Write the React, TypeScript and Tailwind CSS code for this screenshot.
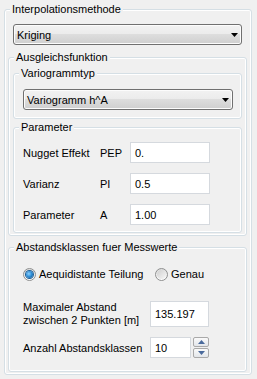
import React from 'react';

type BoxProps = { title: string; className?: string; children?: React.ReactNode };

const GroupBox = ({ title, className, children }: BoxProps) => (
  <fieldset className={`border border-[#d5dfe5] rounded-[3px] shadow-[inset_0_0_0_1px_#ffffff] ${className ?? ''}`}>
    <legend className="ml-[5px] px-[2px] leading-[14px] bg-[#f0f0f0]">{title}</legend>
    {children}
  </fieldset>
);

const ComboBox = ({ value, className }: { value: string; className?: string }) => (
  <div
    className={`flex items-center justify-between h-[21px] pl-[3px] pr-[3px] border border-[#707070] rounded-[3px] bg-[linear-gradient(#f2f2f2_0%,#ebebeb_50%,#dddddd_50%,#cfcfcf_100%)] shadow-[inset_0_0_0_1px_#fcfcfc] ${className ?? ''}`}
  >
    <span>{value}</span>
    <svg width="7" height="4" viewBox="0 0 7 4">
      <path d="M0 0h7L3.5 4z" fill="#000" />
    </svg>
  </div>
);

const TextBox = ({ value, className }: { value: string; className?: string }) => (
  <div className={`flex items-center pl-[4px] bg-white border border-[#d5d9de] ${className ?? ''}`}>{value}</div>
);

const Radio = ({ checked }: { checked?: boolean }) => (
  <div className="w-[13px] h-[13px] rounded-full border border-[#8e8f8f] bg-[linear-gradient(#dcdcdc,#ffffff)] flex items-center justify-center">
    {checked ? (
      <div className="w-[7px] h-[7px] rounded-full bg-[radial-gradient(circle_at_40%_40%,#8fd3ff_0%,#2a8ad4_50%,#0d4b7f_100%)] shadow-[0_0_0_1px_#1d5f98]" />
    ) : (
      <div className="w-[9px] h-[9px] rounded-full bg-[linear-gradient(135deg,#cfcfcf,#f7f7f7)]" />
    )}
  </div>
);

const SpinButton = ({ up }: { up?: boolean }) => (
  <div className="w-[16px] h-[10px] flex items-center justify-center border border-[#a9a9a9] rounded-[2px] bg-[linear-gradient(#fafafa,#e3e6ea)]">
    <svg width="7" height="4" viewBox="0 0 7 4">
      <path d={up ? 'M0 4h7L3.5 0z' : 'M0 0h7L3.5 4z'} fill="#4a6a9c" />
    </svg>
  </div>
);

const paramRows = [
  { label: 'Nugget Effekt', code: 'PEP', value: '0.' },
  { label: 'Varianz', code: 'PI', value: '0.5' },
  { label: 'Parameter', code: 'A', value: '1.00' },
];

export default function App() {
  return (
    <div className="w-[257px] h-[379px] bg-[#f0f0f0] pt-[2px] font-['Liberation_Sans',Arial,sans-serif] text-[11px] leading-[14px] text-black overflow-hidden">
      <GroupBox title="Interpolationsmethode" className="ml-[4px] w-[248px] h-[373px]">
        <ComboBox value="Kriging" className="mt-[8px] ml-[8px] w-[229px]" />

        <GroupBox title="Ausgleichsfunktion" className="mt-[5px] ml-[3px] w-[239px] h-[186px]">
          <GroupBox title="Variogrammtyp" className="mt-[2px] ml-[4px] w-[229px] h-[53px]">
            <ComboBox value="Variogramm h^A" className="mt-[9px] ml-[9px] w-[210px]" />
          </GroupBox>

          <GroupBox title="Parameter" className="mt-[1px] ml-[4px] w-[229px] h-[113px]">
            <div className="mt-[8px] ml-[9px] grid grid-cols-[77px_30px_80px] gap-y-[10px] items-center">
              {paramRows.map((r) => (
                <React.Fragment key={r.code}>
                  <span>{r.label}</span>
                  <span>{r.code}</span>
                  <TextBox value={r.value} className="h-[21px]" />
                </React.Fragment>
              ))}
            </div>
          </GroupBox>
        </GroupBox>

        <GroupBox title="Abstandsklassen fuer Messwerte" className="mt-[4px] ml-[3px] w-[239px] h-[132px]">
          <div className="mt-[13px] ml-[14px] flex items-center">
            <div className="w-[132px] flex items-center gap-[3px]">
              <Radio checked />
              <span>Aequidistante Teilung</span>
            </div>
            <div className="flex items-center gap-[3px]">
              <Radio />
              <span>Genau</span>
            </div>
          </div>

          <div className="mt-[20px] ml-[14px] flex items-center">
            <div className="w-[127px] leading-[13px]">
              Maximaler Abstand
              <br />
              zwischen 2 Punkten [m]
            </div>
            <TextBox value="135.197" className="w-[59px] h-[26px]" />
          </div>

          <div className="mt-[10px] ml-[14px] flex items-center">
            <span className="w-[127px]">Anzahl Abstandsklassen</span>
            <TextBox value="10" className="w-[41px] h-[21px]" />
            <div className="ml-[2px] flex flex-col gap-[1px]">
              <SpinButton up />
              <SpinButton />
            </div>
          </div>
        </GroupBox>
      </GroupBox>
    </div>
  );
}
